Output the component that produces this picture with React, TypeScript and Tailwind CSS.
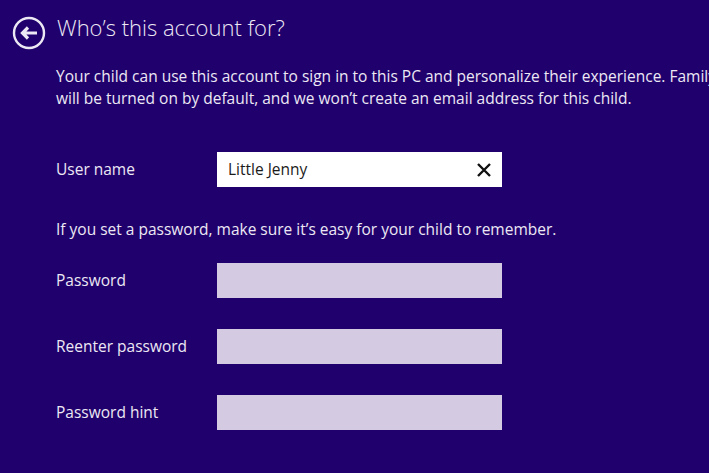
import { useState } from "react";

function BackArrow() {
  return (
    <svg width="34" height="34" viewBox="0 0 34 34" fill="none">
      <circle cx="17" cy="17" r="15" stroke="#ece8f4" strokeWidth="2.4" />
      <path d="M25 17H11M16 11.5L10.5 17l5.5 5.5" stroke="#ece8f4" strokeWidth="3.2" />
    </svg>
  );
}

function Field({ label }: { label: string }) {
  return (
    <div className="flex items-center h-[35px]">
      <label className="w-[161px] text-[15.5px]">{label}</label>
      <input type="password" className="w-[285px] h-[35px] bg-[#d4cbe3] outline-none px-3" />
    </div>
  );
}

export default function App() {
  const [name, setName] = useState("Little Jenny");

  return (
    <div
      className="w-[709px] h-[473px] overflow-hidden bg-[#20006c] text-[#ece8f4]"
      style={{ fontFamily: '"Open Sans", "Noto Sans", sans-serif' }}
    >
      {/* Header */}
      <div className="flex items-center pt-[16px] pl-[12px] gap-[11px]">
        <button><BackArrow /></button>
        <h1 className="text-[22px] font-light leading-none -mt-[13px]">Who’s this account for?</h1>
      </div>

      {/* Intro */}
      <div className="pl-[56px] pt-[15px] text-[15.5px] leading-[22px] whitespace-nowrap">
        <p>Your child can use this account to sign in to this PC and personalize their experience. Family Safety</p>
        <p>will be turned on by default, and we won’t create an email address for this child.</p>
      </div>

      {/* User name */}
      <div className="flex items-center pl-[56px] pt-[43px]">
        <label className="w-[161px] text-[15.5px]">User name</label>
        <div className="flex items-center w-[285px] h-[35px] bg-white">
          <input
            value={name}
            onChange={(e) => setName(e.target.value)}
            className="flex-1 min-w-0 pl-[11px] text-[15.5px] text-[#1b1b1b] outline-none"
          />
          <button onClick={() => setName("")} className="w-[36px] h-full flex items-center justify-center">
            <svg width="14" height="14" viewBox="0 0 14 14">
              <path d="M1 1l12 12M13 1L1 13" stroke="#111" strokeWidth="2.4" />
            </svg>
          </button>
        </div>
      </div>

      <p className="pl-[56px] pt-[31px] text-[15.5px] leading-[22px]">
        If you set a password, make sure it’s easy for your child to remember.
      </p>

      <div className="flex flex-col gap-[31px] pl-[56px] pt-[23px]">
        <Field label="Password" />
        <Field label="Reenter password" />
        <Field label="Password hint" />
      </div>
    </div>
  );
}
